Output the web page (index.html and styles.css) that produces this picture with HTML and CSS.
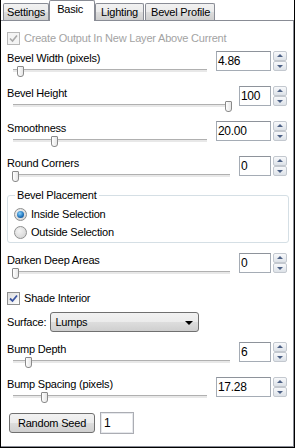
FILE: index.html
```html
<!DOCTYPE html>
<html lang="en">
<head>
  <meta charset="UTF-8" />
  <title>Bevel - Basic</title>
  <link rel="stylesheet" href="styles.css">
</head>
<body>
  <div class="window">
    <div class="tabs">
      <div class="tab">Settings</div>
      <div class="tab active">Basic</div>
      <div class="tab">Lighting</div>
      <div class="tab">Bevel Profile</div>
    </div>

    <div class="panel">
      <div class="check disabled">
        <span class="box"><svg width="11" height="11" viewBox="0 0 11 11"><polyline points="2,5.5 4.5,8 9,2.5" fill="none" stroke="#a8a8a8" stroke-width="1.6"/></svg></span>
        Create Output In New Layer Above Current
      </div>

      <div class="row wide first">
        <div class="field">
          <div class="label">Bevel Width (pixels)</div>
          <div class="slider"><div class="thumb" style="left: 3.6%"></div></div>
        </div>
        <div class="spin"><div class="spin-input">4.86</div><div class="spin-btns"><span class="up"></span><span class="down"></span></div></div>
      </div>

      <div class="row">
        <div class="field">
          <div class="label">Bevel Height</div>
          <div class="slider"><div class="thumb" style="left: 99%"></div></div>
        </div>
        <div class="spin"><div class="spin-input">100</div><div class="spin-btns"><span class="up"></span><span class="down"></span></div></div>
      </div>

      <div class="row wide">
        <div class="field">
          <div class="label">Smoothness</div>
          <div class="slider"><div class="thumb" style="left: 21%"></div></div>
        </div>
        <div class="spin"><div class="spin-input">20.00</div><div class="spin-btns"><span class="up"></span><span class="down"></span></div></div>
      </div>

      <div class="row">
        <div class="field">
          <div class="label">Round Corners</div>
          <div class="slider"><div class="thumb" style="left: 1%"></div></div>
        </div>
        <div class="spin"><div class="spin-input">0</div><div class="spin-btns"><span class="up"></span><span class="down"></span></div></div>
      </div>

      <fieldset class="group">
        <legend>Bevel Placement</legend>
        <div class="radio"><span class="dot on"></span>Inside Selection</div>
        <div class="radio"><span class="dot"></span>Outside Selection</div>
      </fieldset>

      <div class="row after-group">
        <div class="field">
          <div class="label">Darken Deep Areas</div>
          <div class="slider"><div class="thumb" style="left: 1%"></div></div>
        </div>
        <div class="spin"><div class="spin-input">0</div><div class="spin-btns"><span class="up"></span><span class="down"></span></div></div>
      </div>

      <div class="check shade">
        <span class="box"><svg width="11" height="11" viewBox="0 0 11 11"><polyline points="2,5.5 4.5,8 9,2.5" fill="none" stroke="#3a54a0" stroke-width="1.8"/></svg></span>
        Shade Interior
      </div>

      <div class="surface">
        <span>Surface:</span>
        <div class="select">Lumps<span class="caret"></span></div>
      </div>

      <div class="row after-select">
        <div class="field">
          <div class="label">Bump Depth</div>
          <div class="slider"><div class="thumb" style="left: 7%"></div></div>
        </div>
        <div class="spin"><div class="spin-input">6</div><div class="spin-btns"><span class="up"></span><span class="down"></span></div></div>
      </div>

      <div class="row wide">
        <div class="field">
          <div class="label">Bump Spacing (pixels)</div>
          <div class="slider"><div class="thumb" style="left: 16%"></div></div>
        </div>
        <div class="spin"><div class="spin-input">17.28</div><div class="spin-btns"><span class="up"></span><span class="down"></span></div></div>
      </div>

      <div class="seed">
        <button class="btn">Random Seed</button>
        <div class="seed-input">1</div>
      </div>
    </div>
  </div>
</body>
</html>
```

FILE: styles.css
```css
* {
  box-sizing: border-box;
}
body {
  margin: 0;
  font-family: "Liberation Sans", Arial, sans-serif;
  font-size: 11px;
  letter-spacing: -0.2px;
  color: #000;
  background: #fff;
}
.window {
  width: 295px;
  height: 448px;
  display: flex;
  flex-direction: column;
  border-left: 1px solid #000;
  border-right: 1px solid #000;
  border-bottom: 1px solid #000;
}

/* tabs */
.tabs {
  display: flex;
  align-items: flex-end;
  height: 20px;
  padding-left: 2px;
  position: relative;
  z-index: 1;
}
.tab {
  height: 17px;
  line-height: 16px;
  padding: 0 3px;
  border: 1px solid #898c95;
  border-bottom: none;
  border-radius: 2px 2px 0 0;
  background: linear-gradient(#f2f2f2, #ebebeb 50%, #dddddd 51%, #cfcfcf);
  margin-right: -1px;
}
.tab.active {
  height: 21px;
  margin-bottom: -1px;
  line-height: 17px;
  padding: 0 11px 0 7px;
  margin-left: 1px;
  margin-right: 0;
  background: #fff;
  position: relative;
}
.tab:nth-child(3) {
  padding: 0 5px;
}
.tab:nth-child(4) {
  margin-left: 2px;
  padding: 0 4px 0 5px;
}

.panel {
  flex: 1;
  border: 1px solid #898c95;
  border-left: none;
  padding: 10px 6px 0 6px;
  display: flex;
  flex-direction: column;
}

/* checkboxes */
.check {
  display: flex;
  align-items: center;
  gap: 4px;
  height: 14px;
}
.check.disabled {
  color: #a3a3a3;
}
.box {
  width: 13px;
  height: 13px;
  border: 1px solid #8e8f8f;
  background: linear-gradient(135deg, #dcdcdc, #fff);
  display: flex;
  align-items: center;
  justify-content: center;
}
.disabled .box {
  border-color: #b8b8b8;
  background: #f4f4f4;
}
.check.shade {
  margin-top: 11px;
}

/* slider rows */
.row {
  display: flex;
  align-items: flex-start;
  margin-top: 8px;
}
.row.first {
  margin-top: 6px;
}
.row.after-group {
  margin-top: 10px;
}
.row.after-select {
  margin-top: 10px;
}
.field {
  flex: 1;
}
.label {
  height: 14px;
  line-height: 14px;
}
.slider {
  position: relative;
  height: 13px;
  margin-left: 6px;
}
.slider::before {
  content: "";
  position: absolute;
  left: 0;
  right: 0;
  top: 4px;
  height: 2px;
  border-top: 1px solid #b0b0b0;
  background: #e8e8e8;
}
.thumb {
  position: absolute;
  top: 1px;
  width: 7px;
  height: 11px;
  margin-left: -3px;
  border: 1px solid #8a8a8a;
  border-radius: 1px 1px 3px 3px;
  background: linear-gradient(90deg, #fff, #e6e6e6);
}

/* spin boxes */
.spin {
  display: flex;
  gap: 2px;
  margin-left: 9px;
}
.spin-input {
  width: 32px;
  height: 20px;
  line-height: 18px;
  padding-left: 1px;
  border: 1px solid #a5acb5;
  border-top-color: #8e939b;
  font-size: 12px;
  letter-spacing: -0.3px;
}
.wide .spin-input {
  width: 55px;
}
.spin-btns {
  width: 14px;
  height: 20px;
  display: flex;
  flex-direction: column;
}
.spin-btns span {
  flex: 1;
  border: 1px solid #c3c8cf;
  border-radius: 2px;
  background: linear-gradient(#f8f9fb, #dde2e8);
  position: relative;
}
.spin-btns span::after {
  content: "";
  position: absolute;
  left: 3px;
  top: 2px;
  border-left: 3px solid transparent;
  border-right: 3px solid transparent;
}
.spin-btns .up::after {
  border-bottom: 3px solid #4d6185;
}
.spin-btns .down::after {
  top: 3px;
  border-top: 3px solid #4d6185;
}

/* group box */
.group {
  margin: 5px -2px 0 0;
  padding: 2px 6px 1px 6px;
  border: 1px solid #d5dfe5;
  border-radius: 3px;
}
.group legend {
  margin-left: 1px;
  padding: 0 2px;
  line-height: 14px;
}
.radio {
  display: flex;
  align-items: center;
  gap: 4px;
  height: 18px;
}
.radio:first-of-type {
  margin-top: 1px;
}
.dot {
  width: 13px;
  height: 13px;
  border-radius: 50%;
  border: 1px solid #8e8f8f;
  background: radial-gradient(circle at 40% 35%, #f4f4f4, #cfcfcf);
  display: flex;
  align-items: center;
  justify-content: center;
}
.dot.on::after {
  content: "";
  width: 7px;
  height: 7px;
  border-radius: 50%;
  background: radial-gradient(circle at 40% 35%, #8ad3ff, #1b6fb8 60%, #0d3e78);
}

/* surface dropdown */
.surface {
  display: flex;
  align-items: center;
  gap: 4px;
  margin-top: 7px;
}
.select {
  width: 149px;
  height: 20px;
  line-height: 18px;
  padding-left: 4px;
  border: 1px solid #707070;
  border-radius: 3px;
  background: linear-gradient(#f2f2f2, #ebebeb 50%, #dddddd 51%, #cfcfcf);
  position: relative;
}
.caret {
  position: absolute;
  right: 5px;
  top: 8px;
  border-left: 4px solid transparent;
  border-right: 4px solid transparent;
  border-top: 4px solid #000;
}

/* seed */
.seed {
  display: flex;
  align-items: center;
  margin-top: 8px;
  padding-left: 2px;
}
.btn {
  width: 86px;
  height: 20px;
  padding: 0;
  font: inherit;
  letter-spacing: inherit;
  color: #000;
  border: 1px solid #707070;
  border-radius: 3px;
  background: linear-gradient(#f2f2f2, #ebebeb 50%, #dddddd 51%, #cfcfcf);
}
.seed-input {
  width: 34px;
  height: 22px;
  line-height: 20px;
  margin-left: 5px;
  padding-left: 3px;
  border: 1px solid #abadb3;
  box-shadow: inset 0 0 0 1px #e6e8ec;
  font-size: 12px;
}
```
